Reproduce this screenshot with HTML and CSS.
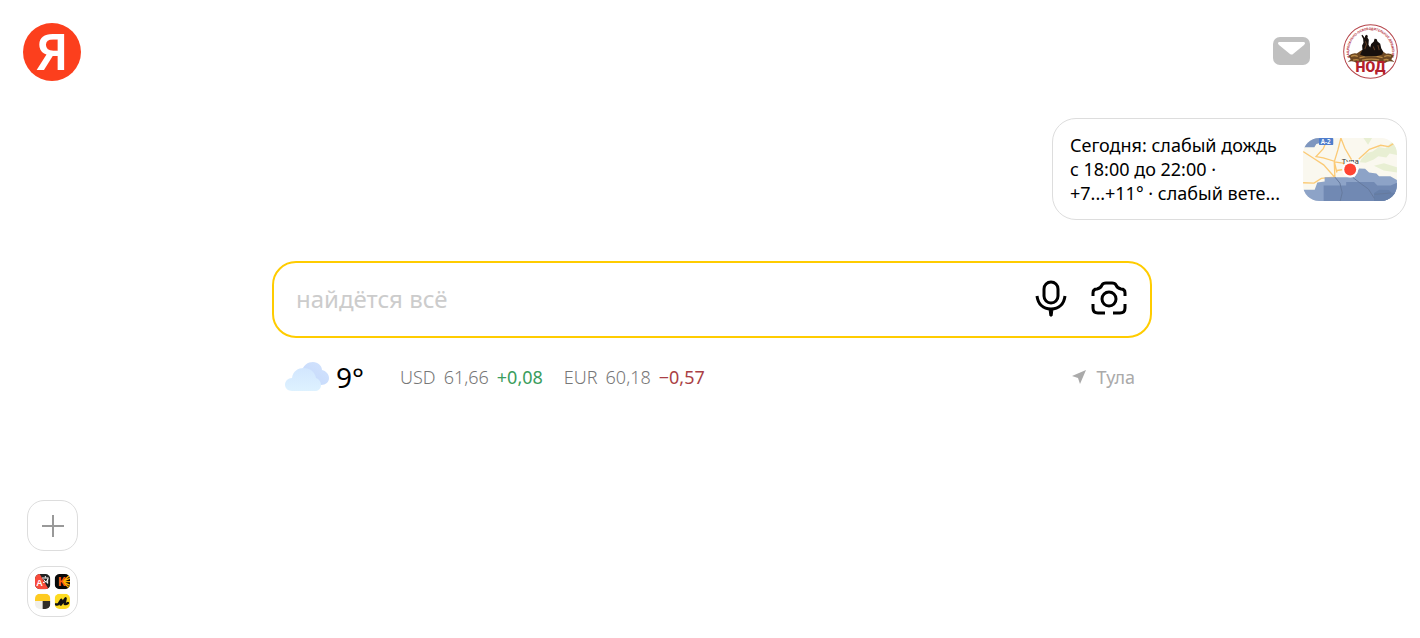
FILE: index.html
```html
<!DOCTYPE html>
<html lang="ru">
<head>
    <meta charset="UTF-8">
    <meta name="viewport" content="width=device-width, initial-scale=1">
    <title>Яндекс</title>
    <link rel="stylesheet" href="styles.css">
</head>
<body>
    <header class="header">
        <a class="logo" href="#">Я</a>
        <nav class="user-nav">
            <a class="mail" href="#" aria-label="Почта">
                <svg width="37" height="28" viewBox="0 0 37 28">
                    <rect width="37" height="28" rx="7" fill="#c0c0c0"/>
                    <path d="M6 5h25q2 1 0 3L20 17q-1 1-3 0L6 8q-2-2 0-3z" fill="#fff"/>
                </svg>
            </a>
            <a class="avatar" href="#" aria-label="Профиль">
                <svg width="55" height="55" viewBox="249 27 164 164">
                    <defs>
                        <path id="ring" d="M271 131A64 64 0 1 1 391 131"/>
                    </defs>
                    <circle cx="331" cy="109" r="80" fill="#fff" stroke="#b5444a" stroke-width="3"/>
                    <text class="avatar-ring" text-anchor="middle"><textPath href="#ring" startOffset="50%">НАЦИОНАЛЬНО-ОСВОБОДИТЕЛЬНОЕ ДВИЖЕНИЕ</textPath></text>
                    <path d="M265 122q12-10 25-7l14-10h58l16 11q12-3 22 6l-7 10 10 9q-18-6-29 2-43-12-84 0-13-8-27-2l9-9z" fill="#6b4722"/>
                    <path d="M273 124q10-6 20 0m5 4q32-10 69-1m5-3q10-5 20-1M279 135q10-4 17 0m10 0q26-6 51-1m13 1q9-4 15 0" fill="none" stroke="#b98a45" stroke-width="4"/>
                    <path d="M300 119l7-16-1-12 4-8-1-12-5-10 3-2 7 10 1-7 5-3 3 4-1 5 4 6-1 15 5 8 3-10 8-8 2-8 6 1 3 7 8 7 3 13 6 11-3 8-18 5-32 1z" fill="#17100d"/>
                    <path d="M316 79l3 9-5 14m25-8l5 11m9-15l4 15" fill="none" stroke="#654127" stroke-width="3"/>
                    <text class="avatar-name" x="331" y="171" text-anchor="middle">НОД</text>
                </svg>
            </a>
        </nav>
    </header>

    <main class="content">
        <a class="weather-alert" href="#">
            <span class="alert-text">Сегодня: слабый дождь<br>с 18:00 до 22:00 ·<br>+7...+11° · слабый вете...</span>
            <svg class="map" width="94" height="63" viewBox="38 41 283 190">
                <rect x="38" y="41" width="283" height="190" fill="#faf8ef"/>
                <path d="M214 104l16-18 18-4 18-14 20 4 20-18 15 8v30l-22-4-10 12-24-4-14 10-24 10-18-2z" fill="#e8efd3"/>
                <path d="M220 41l26 0-12 20zM252 125l30-8 39 12v16l-40-6z" fill="#e8efd3"/>
                <path d="M38 41h60l-6 14-14 4-6 10H38z" fill="#7e96bf"/>
                <g fill="none" stroke="#fbca76" stroke-width="4">
                    <path d="M38 82l28 18 34 22 34 38M113 41l-14 32-22 24 22 4 33 10 8 34M152 41l-9 36-11 36 2 47M152 41l12 31 20 34M206 104l32-29 34-12 24 4 25-15M132 113l26 4 22 16-40 6M38 176l33 1 22-14 39-4"/>
                </g>
                <path d="M38 197h35l8-22 22-3V159h90l14-26 18 1 12 11 22 3 8 8h34l20 12v63H38z" fill="#8da3c7"/>
                <path d="M100 184h68v-10h84l10 10h40l19-8v55H100z" fill="#7189b3"/>
                <path d="M252 207l16-10 29 1 8 8h16v25h-69z" fill="#6780aa"/>
                <path d="M134 159l15 18 7 29-6 25M188 160l22 17 25 18 18 28m0-12l49-4" fill="none" stroke="#667a9d" stroke-width="3"/>
                <rect x="86" y="41" width="43" height="21" rx="2" fill="#4f7dcc"/>
                <text class="map-road" x="91" y="58">А-2</text>
                <text class="map-city" x="155" y="120">Тула</text>
                <circle cx="180" cy="136" r="24" fill="#fff"/>
                <circle cx="180" cy="136" r="18" fill="#ff4433"/>
            </svg>
        </a>

        <div class="search-block">
            <form class="search">
                <input class="search-input" type="text" placeholder="найдётся всё" aria-label="Запрос">
                <button class="search-button" type="button" aria-label="Голосовой поиск">
                    <svg width="32" height="38" viewBox="0 0 32 38" fill="none" stroke="#000" stroke-width="3">
                        <rect x="9" y="3" width="14" height="21" rx="7"/>
                        <path d="M2 17c1 8 6 13 14 13s13-5 14-13"/>
                        <path d="M14 30h4l-1 7h-2z" fill="#000" stroke-width="1"/>
                    </svg>
                </button>
                <button class="search-button" type="button" aria-label="Поиск по картинке">
                    <svg width="36" height="34" viewBox="0 0 36 34" fill="none" stroke="#000" stroke-width="3">
                        <path d="M2 15v-3q0-4 4-4 4-1 5-4 1-2 4-2h6q3 0 4 2 1 3 5 4 4 0 4 4v3"/>
                        <path d="M2 23v4q0 5 5 5h7M34 23v4q0 5-5 5h-7"/>
                        <circle cx="18" cy="18" r="7"/>
                    </svg>
                </button>
            </form>

            <div class="informers">
                <a class="weather" href="#">
                    <svg width="44" height="30" viewBox="0 0 44 30">
                        <defs>
                            <linearGradient id="back" x1="1" y1="0" x2="0" y2="1">
                                <stop offset="0" stop-color="#d3e3fd"/>
                                <stop offset="1" stop-color="#c3d8fb"/>
                            </linearGradient>
                            <linearGradient id="front" x1="0" y1="0" x2="0" y2="1">
                                <stop offset="0" stop-color="#d2e6fe"/>
                                <stop offset="1" stop-color="#def2ff"/>
                            </linearGradient>
                        </defs>
                        <path d="M16 11C18 3 23 0 28 0c5 0 9 4 9 8 4 1 7 4 7 8s-3 7-8 7H20z" fill="url(#back)"/>
                        <path d="M7 29c-4 0-7-3-7-6 0-4 3-7 7-7C8 9 13 6 19 6c6 0 11 4 12 10 3 1 5 4 5 7 0 4-3 6-6 6z" fill="url(#front)"/>
                    </svg>
                    <span class="degrees">9°</span>
                </a>
                <a class="rate" href="#">
                    <span>USD</span><span>61,66</span><span class="up">+0,08</span>
                </a>
                <a class="rate" href="#">
                    <span>EUR</span><span>60,18</span><span class="down">−0,57</span>
                </a>
                <a class="city" href="#">
                    <svg width="14" height="14" viewBox="0 0 14 14"><path d="M0 6L14 0 8 14 6 8z" fill="#aaa"/></svg>
                    Тула
                </a>
            </div>
        </div>
    </main>

    <aside class="tiles">
        <button class="tile" type="button" aria-label="Добавить">
            <svg width="22" height="22" viewBox="0 0 22 22"><path d="M11 0v22M0 11h22" stroke="#999" stroke-width="2"/></svg>
        </button>
        <button class="tile" type="button" aria-label="Сервисы">
            <svg width="35" height="35" viewBox="0 0 105 105">
                <defs>
                    <clipPath id="icon"><rect width="46" height="46" rx="15"/></clipPath>
                </defs>
                <g clip-path="url(#icon)">
                    <path d="M0 0h46v46H0z" fill="#222"/>
                    <path d="M0 0h14l27 46H0z" fill="#f94b3b"/>
                    <text class="icon-letter" x="4" y="37" font-size="27">A</text>
                    <path d="M21 12h20m-10-6v5m-7 15q13-2 16-12m-14 2q3 8 13 10M38 14v15" fill="none" stroke="#fff" stroke-width="3"/>
                </g>
                <g transform="translate(59 0)" clip-path="url(#icon)">
                    <path d="M0 0h46v46H0z" fill="#080808"/>
                    <path d="M23 23L46 3M23 23l23-10M23 23h23M23 23l23 11M23 23l22 20" stroke="#ffb000" stroke-width="4"/>
                    <text class="kino-letter" x="10" y="37">К</text>
                </g>
                <g transform="translate(0 59)" clip-path="url(#icon)">
                    <path d="M0 0h46v46H0z" fill="#f1efea"/>
                    <path d="M0 0h46v22H0z" fill="#fecb20"/>
                    <path d="M23 22h23v24H23z" fill="#302d28"/>
                </g>
                <g transform="translate(59 59)" clip-path="url(#icon)">
                    <path d="M0 0h46v46H0z" fill="#fddb22"/>
                    <path d="M4 32q6 3 10-5l6-9-2 15 15-19-3 17q4 2 10-3" fill="none" stroke="#111" stroke-width="7" stroke-linejoin="round" stroke-linecap="round"/>
                </g>
            </svg>
        </button>
    </aside>
</body>
</html>
```
FILE: styles.css
```css
* {
    box-sizing: border-box;
}

body {
    display: flex;
    flex-direction: column;
    min-height: 100vh;
    margin: 0;
    background-color: #fff;
    color: #000;
    font-family: 'Noto Sans', 'Open Sans', sans-serif;
    font-size: 18px;
}

a {
    color: inherit;
    text-decoration: none;
}

button {
    padding: 0;
    border: none;
    background: none;
    cursor: pointer;
}

svg {
    display: block;
    flex: none;
}

.header {
    display: flex;
    align-items: center;
    justify-content: space-between;
    padding: 23px 22px 0 23px;
}

.logo {
    width: 58px;
    height: 58px;
    border-radius: 50%;
    background-color: #fc3f1d;
    color: #fff;
    font-size: 50px;
    font-weight: 600;
    line-height: 56px;
    text-align: center;
}

.user-nav {
    display: flex;
    align-items: center;
    gap: 33px;
    padding-bottom: 2px;
}

.avatar-ring {
    fill: #b5303a;
    font-family: 'Roboto', sans-serif;
    font-size: 10px;
    font-weight: 700;
}

.avatar-name {
    fill: #b4202c;
    font-family: 'Roboto', sans-serif;
    font-size: 42px;
    font-weight: 900;
}

.content {
    display: flex;
    flex-direction: column;
    padding: 37px 13px 0 17px;
}

.weather-alert {
    display: flex;
    align-items: center;
    align-self: flex-end;
    gap: 23px;
    padding: 14px 9px 14px 17px;
    border: 1px solid #ddd;
    border-radius: 24px;
    line-height: 24px;
}

.map {
    border-radius: 16px;
}

.map-road {
    fill: #fff;
    font-size: 19px;
    font-weight: 600;
}

.map-city {
    fill: #333;
    font-size: 24px;
}

.search-block {
    width: 100%;
    max-width: 880px;
    margin: 41px auto 0;
}

.search {
    display: flex;
    align-items: center;
    gap: 24px;
    height: 77px;
    padding: 0 23px 3px 22px;
    border: 2px solid #fc0;
    border-radius: 24px;
}

.search-input {
    flex: 1;
    min-width: 0;
    padding: 0;
    border: none;
    outline: none;
    font-family: inherit;
    font-size: 24px;
}

.search-input::placeholder {
    color: #ccc;
    opacity: 1;
}

.informers {
    display: flex;
    align-items: center;
    padding: 20px 17px 0 13px;
    color: #888;
}

.weather {
    display: flex;
    align-items: center;
    gap: 7px;
    margin-right: 36px;
}

.degrees {
    color: #000;
    font-size: 28px;
}

.rate {
    display: flex;
    gap: 8px;
    margin-right: 21px;
    color: #777;
    font-weight: 300;
}

.up {
    color: #3a9d5d;
    font-weight: 400;
}

.down {
    color: #aa3f45;
    font-weight: 400;
}

.city {
    display: flex;
    align-items: center;
    gap: 11px;
    margin-left: auto;
    color: #aaa;
}

.tiles {
    display: flex;
    flex-direction: column;
    gap: 15px;
    margin-top: auto;
    padding: 0 27px 21px;
}

.tile {
    display: flex;
    align-items: center;
    justify-content: center;
    width: 51px;
    height: 51px;
    border: 1px solid #ddd;
    border-radius: 17px;
}

.icon-letter {
    fill: #fff;
    font-weight: 600;
}

.kino-letter {
    fill: #ff5b18;
    font-size: 38px;
    font-weight: 700;
}
```
